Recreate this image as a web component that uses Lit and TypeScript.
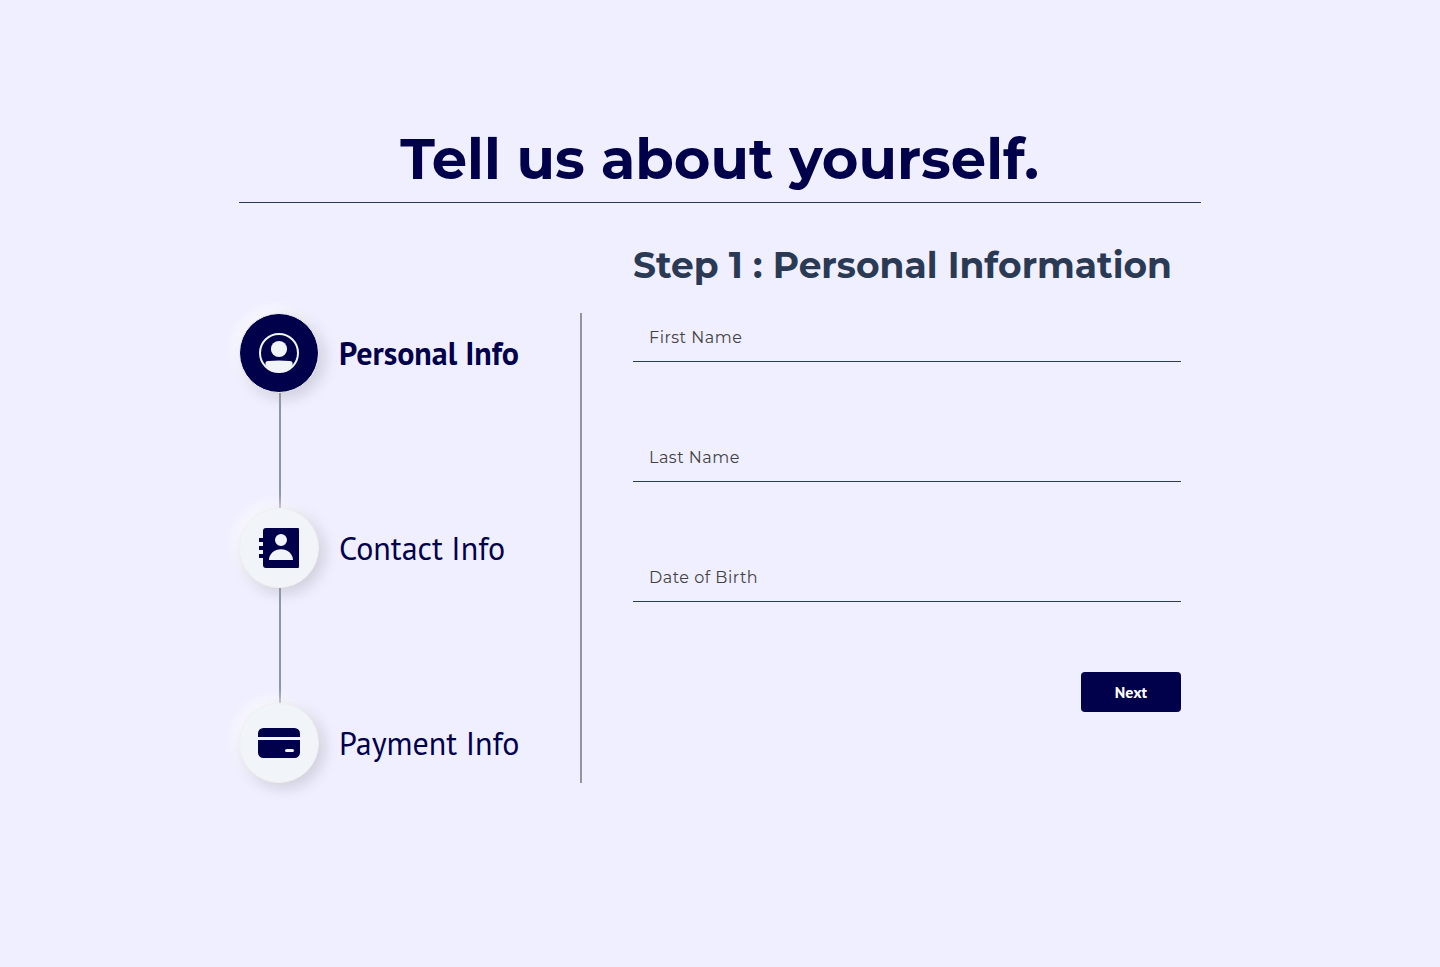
import { LitElement, html, svg, css } from "lit";
import { customElement, state } from "lit/decorators.js";
import { classMap } from "lit/directives/class-map.js";

const userIcon = svg`
  <circle cx="21" cy="21" r="19" fill="none" stroke="currentColor" stroke-width="2"/>
  <circle cx="21" cy="17" r="8.1" fill="currentColor"/>
  <path fill="currentColor" d="M7.500 33v-1.700c0-1.500 1-2.200 2.800-2.300q10.700-.8 21.400 0c1.800.1 2.800.8 2.800 2.300V33A19 19 0 0 1 21 40.500 19 19 0 0 1 7.500 33z"/>`;

const contactIcon = svg`
  <path fill="currentColor" fill-rule="evenodd" d="M8 1h32a1 1 0 0 1 1 1v38a1 1 0 0 1-1 1H8a3 3 0 0 1-3-3v-7H1v-4h4v-4H1v-4h4v-4H1v-4h4V4a3 3 0 0 1 3-3zM23 7a6 6 0 1 0 0 12 6 6 0 0 0 0-12zM11 33h24c0-6-5.500-10.700-12-10.700S11 27 11 33z"/>`;

const cardIcon = svg`
  <path fill="currentColor" fill-rule="evenodd" d="M5.500 6h31A5.500 5.500 0 0 1 42 11.500V15H0v-3.500A5.500 5.500 0 0 1 5.500 6zM0 18h42v12.500a5.500 5.500 0 0 1-5.500 5.500h-31A5.500 5.500 0 0 1 0 30.500zM28.500 27a1.500 1.500 0 0 0 0 3h6a1.500 1.500 0 0 0 0-3z"/>`;

const steps = [
  { label: "Personal Info", icon: userIcon },
  { label: "Contact Info", icon: contactIcon },
  { label: "Payment Info", icon: cardIcon },
];

const fields = ["First Name", "Last Name", "Date of Birth"];

@customElement("app-root")
export class AppRoot extends LitElement {
  static styles = css`
    :host {
      display: block;
      box-sizing: border-box;
      height: 967px;
      padding: 116px 239px 0;
      overflow: hidden;
      background: #f0efff;
      color: #00004b;
      font-family: Montserrat, Inter, sans-serif;
    }
    h1, h2 { margin: 0; font-weight: 700; white-space: nowrap; }
    .title {
      box-sizing: border-box;
      height: 87px;
      padding-right: 1px;
      border-bottom: 1px solid #2c3c54;
      font-size: 56px;
      line-height: 86px;
      text-align: center;
    }
    .layout { display: grid; grid-template-columns: 343px 548px; column-gap: 51px; }
    .steps {
      display: flex;
      flex-direction: column;
      margin-top: 110px;
      height: 470px;
      box-sizing: border-box;
      border-right: 2px solid #8e95a9;
    }
    .step { display: flex; align-items: center; gap: 20px; height: 80px; }
    .link { width: 2px; height: 115px; margin-left: 40px; background: #8e95a9; }
    .dot {
      box-sizing: border-box;
      display: flex;
      align-items: center;
      justify-content: center;
      flex: none;
      width: 80px;
      height: 80px;
      border: 1px solid #f0f0f0;
      border-radius: 50%;
      background: #f1f5f9;
      box-shadow: 5px 5px 15px rgba(0, 0, 0, 0.15), -4px -4px 13px rgba(255, 255, 255, 0.8);
    }
    .active .dot { background-color: #00004b; color: #f1f5f9; }
    .name {
      font-family: "PT Sans", "Open Sans", sans-serif;
      font-size: 32px;
      line-height: 40px;
      white-space: nowrap;
    }
    .active .name { font-weight: 700; }
    .form { padding-top: 38px; }
    .heading {
      height: 72px;
      color: #2b3a54;
      font-size: 36px;
      line-height: 48px;
    }
    .field {
      display: grid;
      height: 48px;
      margin-bottom: 71px;
      border-bottom: 1px solid #2c3c54;
    }
    .hint, .input { grid-area: 1 / 1; }
    .hint {
      justify-self: start;
      padding-left: 16px;
      color: #424242;
      font-size: 16px;
      line-height: 49px;
      letter-spacing: 0.5px;
      white-space: nowrap;
    }
    .input { width: 100%; box-sizing: border-box; border: 0; outline: 0; padding: 0 16px; background: none; }
    .next {
      display: block;
      width: 100px;
      height: 40px;
      margin: -1px 0 0 auto;
      padding: 0;
      border: 0;
      border-radius: 4px;
      background: #00004b;
      color: #fff;
      font: 700 16px/40px "PT Sans", "Open Sans", sans-serif;
    }
  `;

  @state() private current = 0;

  render() {
    return html`
      <h1 class="title">Tell us about yourself.</h1>
      <div class="layout">
        <div class="steps">
          ${steps.map((s, i) => html`
            ${i ? html`<div class="link"></div>` : ""}
            <div class=${classMap({ step: true, active: i === this.current })}>
              <div class="dot"><svg width="42" height="42" viewBox="0 0 42 42">${s.icon}</svg></div>
              <span class="name">${s.label}</span>
            </div>`)}
        </div>
        <div class="form">
          <h2 class="heading">Step 1 : Personal Information</h2>
          ${fields.map((f) => html`
            <label class="field"><span class="hint">${f}</span><input class="input" /></label>`)}
          <button class="next">Next</button>
        </div>
      </div>`;
  }
}
